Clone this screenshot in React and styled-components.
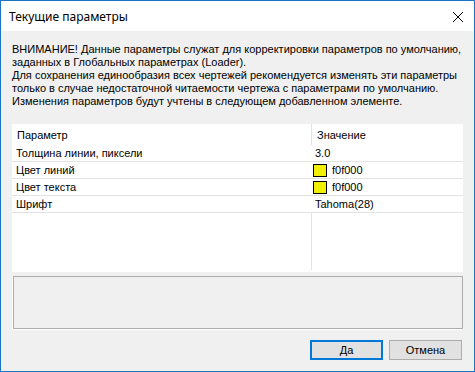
import React from "react";
import styled, { createGlobalStyle } from "styled-components";

const Global = createGlobalStyle`
  html, body { margin: 0; padding: 0; background: #ffffff; }
  * { box-sizing: border-box; }
`;

const Window = styled.div`
  width: 475px;
  height: 372px;
  border: 1px solid #1c74c4;
  background: #f0f0f0;
  display: flex;
  flex-direction: column;
  font-family: Tahoma, "Liberation Sans", Arial, sans-serif;
  font-size: 11px;
  color: #000;
`;

const TitleBar = styled.div`
  height: 30px;
  background: #ffffff;
  display: flex;
  align-items: center;
  justify-content: space-between;
  padding: 0 10px 0 8px;
  flex-shrink: 0;
`;

const Title = styled.div`
  font-family: "Segoe UI", "Noto Sans", sans-serif;
  font-size: 12px;
  color: #000;
  padding-top: 1px;
`;

const CloseIcon = styled.svg`
  width: 12px;
  height: 12px;
  margin-top: 1px;
`;

const Body = styled.div`
  flex: 1;
  display: flex;
  flex-direction: column;
  padding: 12px 11px 0 11px;
`;

const Notice = styled.div`
  line-height: 13px;
  white-space: nowrap;
  height: 65px;
`;

const Table = styled.div`
  margin-top: 16px;
  height: 148px;
  background: #ffffff;
  display: grid;
  grid-template-columns: 299px 1fr;
  grid-template-rows: 21px repeat(4, 17px) 1fr;
`;

const HeadCell = styled.div`
  display: flex;
  align-items: center;
  padding-left: ${(p) => p.$indent}px;
  padding-top: 1px;
  border-left: ${(p) => (p.$divider ? "1px solid #e3e3e3" : "none")};
`;

const Cell = styled.div`
  display: flex;
  align-items: center;
  padding-left: ${(p) => p.$indent}px;
  border-bottom: 1px solid #e3e3e3;
  gap: 5px;
`;

const Filler = styled.div`
  border-left: ${(p) => (p.$divider ? "1px solid #e3e3e3" : "none")};
  margin-bottom: ${(p) => (p.$divider ? "2px" : "0")};
`;

const Swatch = styled.span`
  width: 14px;
  height: 13px;
  border: 1px solid #000;
  background: ${(p) => p.$color};
  flex-shrink: 0;
`;

const Panel = styled.div`
  margin: 4px 0 0 1px;
  width: 450px;
  height: 53px;
  border: 1px solid #adadad;
  box-shadow: -1px 1px 0 #ffffff;
`;

const Buttons = styled.div`
  margin-top: 11px;
  display: flex;
  justify-content: flex-end;
  gap: 6px;
  padding-right: 1px;
`;

const Button = styled.button`
  width: 73px;
  height: 20px;
  background: #e1e1e1;
  border: ${(p) => (p.$primary ? "2px solid #0078d7" : "1px solid #adadad")};
  font-family: Tahoma, "Liberation Sans", Arial, sans-serif;
  font-size: 11px;
  color: #000;
  padding: 0;
  display: flex;
  align-items: center;
  justify-content: center;
`;

const rows = [
  { name: "Толщина линии, пиксели", value: "3.0" },
  { name: "Цвет линий", value: "f0f000", color: "#f0f000" },
  { name: "Цвет текста", value: "f0f000", color: "#f0f000" },
  { name: "Шрифт", value: "Tahoma(28)" },
];

export default function App() {
  return (
    <>
      <Global />
      <Window>
        <TitleBar>
          <Title>Текущие параметры</Title>
          <CloseIcon viewBox="0 0 12 12">
            <path d="M1 1 L11 11 M11 1 L1 11" stroke="#000" strokeWidth="1" fill="none" />
          </CloseIcon>
        </TitleBar>
        <Body>
          <Notice>
            ВНИМАНИЕ! Данные параметры служат для корректировки параметров по умолчанию,
            <br />
            заданных в Глобальных параметрах (Loader).
            <br />
            Для сохранения единообразия всех чертежей рекомендуется изменять эти параметры
            <br />
            только в случае недостаточной читаемости чертежа с параметрами по умолчанию.
            <br />
            Изменения параметров будут учтены в следующем добавленном элементе.
          </Notice>
          <Table>
            <HeadCell $indent={5}>Параметр</HeadCell>
            <HeadCell $indent={5} $divider>Значение</HeadCell>
            {rows.map((r) => (
              <React.Fragment key={r.name}>
                <Cell $indent={4}>{r.name}</Cell>
                <Cell $indent={r.color ? 2 : 4}>
                  {r.color && <Swatch $color={r.color} />}
                  {r.value}
                </Cell>
              </React.Fragment>
            ))}
            <Filler />
            <Filler $divider />
          </Table>
          <Panel />
          <Buttons>
            <Button $primary>Да</Button>
            <Button>Отмена</Button>
          </Buttons>
        </Body>
      </Window>
    </>
  );
}
